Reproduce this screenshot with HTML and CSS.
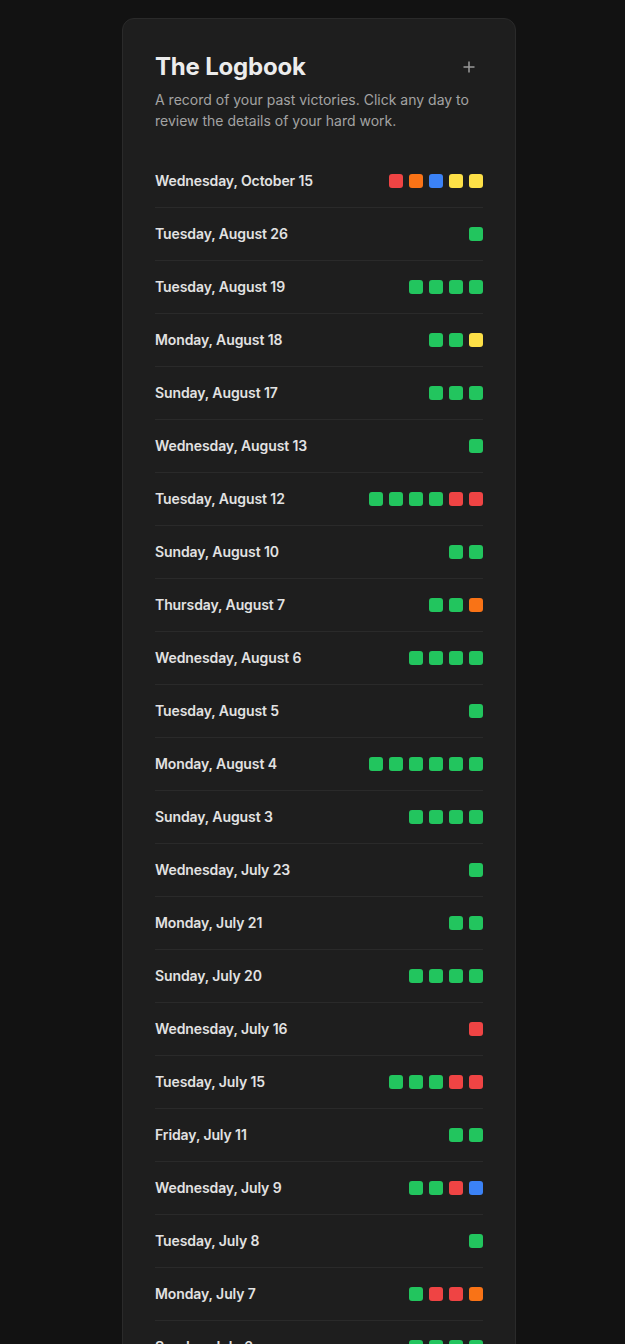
FILE: index.html
```html
<!DOCTYPE html>
<html lang="en">
<head>
<meta charset="utf-8">
<title>The Logbook</title>
<link rel="stylesheet" href="styles.css">
</head>
<body>
<main class="page">
  <section class="card">
    <header class="card-head">
      <h1 class="title">The Logbook</h1>
      <button class="add-btn" aria-label="Add">
        <svg width="12" height="12" viewBox="0 0 12 12"><path d="M6 0.5v11M0.5 6h11" stroke="currentColor" stroke-width="1.5" fill="none"/></svg>
      </button>
    </header>
    <p class="subtitle">A record of your past victories. Click any day to review the details of your hard work.</p>
    <ul class="log">
      <li class="row"><span class="date">Wednesday, October 15</span><span class="dots"><i class="d r"></i><i class="d o"></i><i class="d b"></i><i class="d y"></i><i class="d y"></i></span></li>
      <li class="row"><span class="date">Tuesday, August 26</span><span class="dots"><i class="d g"></i></span></li>
      <li class="row"><span class="date">Tuesday, August 19</span><span class="dots"><i class="d g"></i><i class="d g"></i><i class="d g"></i><i class="d g"></i></span></li>
      <li class="row"><span class="date">Monday, August 18</span><span class="dots"><i class="d g"></i><i class="d g"></i><i class="d y"></i></span></li>
      <li class="row"><span class="date">Sunday, August 17</span><span class="dots"><i class="d g"></i><i class="d g"></i><i class="d g"></i></span></li>
      <li class="row"><span class="date">Wednesday, August 13</span><span class="dots"><i class="d g"></i></span></li>
      <li class="row"><span class="date">Tuesday, August 12</span><span class="dots"><i class="d g"></i><i class="d g"></i><i class="d g"></i><i class="d g"></i><i class="d r"></i><i class="d r"></i></span></li>
      <li class="row"><span class="date">Sunday, August 10</span><span class="dots"><i class="d g"></i><i class="d g"></i></span></li>
      <li class="row"><span class="date">Thursday, August 7</span><span class="dots"><i class="d g"></i><i class="d g"></i><i class="d o"></i></span></li>
      <li class="row"><span class="date">Wednesday, August 6</span><span class="dots"><i class="d g"></i><i class="d g"></i><i class="d g"></i><i class="d g"></i></span></li>
      <li class="row"><span class="date">Tuesday, August 5</span><span class="dots"><i class="d g"></i></span></li>
      <li class="row"><span class="date">Monday, August 4</span><span class="dots"><i class="d g"></i><i class="d g"></i><i class="d g"></i><i class="d g"></i><i class="d g"></i><i class="d g"></i></span></li>
      <li class="row"><span class="date">Sunday, August 3</span><span class="dots"><i class="d g"></i><i class="d g"></i><i class="d g"></i><i class="d g"></i></span></li>
      <li class="row"><span class="date">Wednesday, July 23</span><span class="dots"><i class="d g"></i></span></li>
      <li class="row"><span class="date">Monday, July 21</span><span class="dots"><i class="d g"></i><i class="d g"></i></span></li>
      <li class="row"><span class="date">Sunday, July 20</span><span class="dots"><i class="d g"></i><i class="d g"></i><i class="d g"></i><i class="d g"></i></span></li>
      <li class="row"><span class="date">Wednesday, July 16</span><span class="dots"><i class="d r"></i></span></li>
      <li class="row"><span class="date">Tuesday, July 15</span><span class="dots"><i class="d g"></i><i class="d g"></i><i class="d g"></i><i class="d r"></i><i class="d r"></i></span></li>
      <li class="row"><span class="date">Friday, July 11</span><span class="dots"><i class="d g"></i><i class="d g"></i></span></li>
      <li class="row"><span class="date">Wednesday, July 9</span><span class="dots"><i class="d g"></i><i class="d g"></i><i class="d r"></i><i class="d b"></i></span></li>
      <li class="row"><span class="date">Tuesday, July 8</span><span class="dots"><i class="d g"></i></span></li>
      <li class="row"><span class="date">Monday, July 7</span><span class="dots"><i class="d g"></i><i class="d r"></i><i class="d r"></i><i class="d o"></i></span></li>
      <li class="row"><span class="date">Sunday, July 6</span><span class="dots"><i class="d g"></i><i class="d g"></i><i class="d g"></i><i class="d g"></i></span></li>
      <li class="row"><span class="date">Thursday, July 3</span><span class="dots"><i class="d g"></i><i class="d g"></i></span></li>
    </ul>
  </section>
</main>
</body>
</html>
```

FILE: styles.css
```css
* { box-sizing: border-box; }
html, body { margin: 0; padding: 0; }
body {
  background: #121212;
  font-family: Inter, "Noto Sans", "Liberation Sans", sans-serif;
  color: #e5e5e5;
}
.page {
  padding: 18px 0 40px 122px;
}
.card {
  width: 394px;
  background: #1e1e1e;
  border: 1px solid #2a2a2a;
  border-radius: 12px;
  padding: 32px 32px 16px;
}
.card-head {
  display: flex;
  align-items: center;
  justify-content: space-between;
}
.title {
  margin: 0;
  font-size: 24px;
  line-height: 32px;
  font-weight: 700;
  color: #ececec;
  letter-spacing: -0.2px;
}
.add-btn {
  background: none;
  border: 0;
  padding: 0;
  margin-right: 8px;
  color: #9a9a9a;
  display: flex;
  width: 12px;
  height: 12px;
}
.subtitle {
  margin: 6px 0 24px;
  font-size: 14px;
  line-height: 21px;
  color: #a3a3a3;
}
.log {
  list-style: none;
  margin: 0;
  padding: 0;
}
.row {
  display: flex;
  align-items: center;
  justify-content: space-between;
  padding: 16px 0;
  border-bottom: 1px solid #2a2a2a;
}
.date {
  font-size: 14px;
  line-height: 20px;
  font-weight: 600;
  color: #e2e2e2;
  letter-spacing: -0.1px;
}
.dots {
  display: flex;
  gap: 6px;
}
.d {
  display: block;
  width: 14px;
  height: 14px;
  border-radius: 3px;
}
.d.g { background: #22c55e; }
.d.r { background: #ef4444; }
.d.o { background: #f97316; }
.d.b { background: #3b82f6; }
.d.y { background: #fde047; }
```
